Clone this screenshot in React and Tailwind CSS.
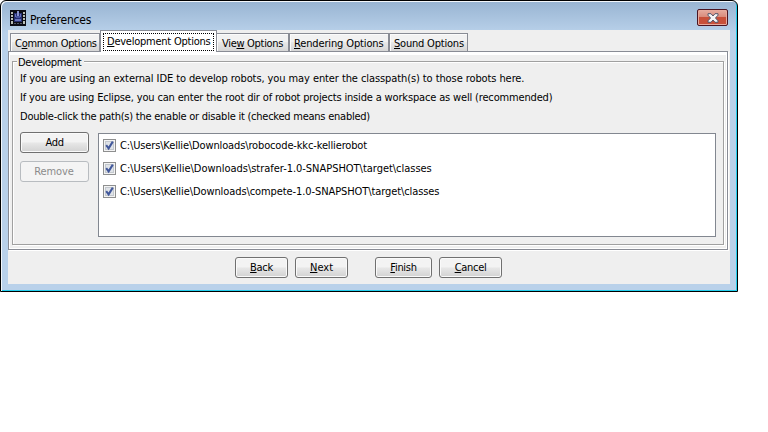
import React from "react";

const btn =
  "flex h-[21px] items-center justify-center rounded-[3px] border border-[#707070] bg-linear-to-b from-[#f3f3f3] from-45% via-[#e6e6e6] via-55% to-[#d2d2d2] shadow-[inset_0_0_0_1px_#fafafa]";
const tab =
  "mt-[3px] flex h-[18px] shrink-0 items-center border border-b-0 border-[#898c95] bg-linear-to-b from-[#f2f2f2] from-45% via-[#e8e8e8] via-50% to-[#d6d6d6] pt-[2px] pl-[4px] shadow-[inset_1px_1px_0_#fbfbfb]";

function Label({ text, k = -1, className = "" }) {
  return (
    <span className={"whitespace-pre leading-[14px] " + className}>
      {k < 0 ? text : (
        <>
          {text.slice(0, k)}
          <span className="underline decoration-1 underline-offset-[1px]">{text[k]}</span>
          {text.slice(k + 1)}
        </>
      )}
    </span>
  );
}

function RobotIcon() {
  return (
    <svg width="16" height="16" viewBox="0 0 16 16" shapeRendering="crispEdges" className="shrink-0">
      <rect width="16" height="16" fill="#0c0c14" />
      <path d="M1 2h2v2H1zM1 5h2v2H1zM1 8h2v2H1zM1 11h2v3H1zM13 2h2v2h-2zM13 5h2v2h-2zM13 8h2v2h-2zM13 11h2v3h-2z" fill="#b9bdb6" />
      <path d="M4 3h8v9H4z" fill="#252d70" />
      <path d="M5 4h1v3H5zM10 4h1v3h-1zM5 9h6v2H5z" fill="#6873bb" />
      <path d="M7 1h2v5H7z" fill="#8993ce" />
      <path d="M6 6h4v2H6z" fill="#4652a0" />
      <path d="M4 13h2v1H4zM7 13h2v1H7zM10 13h2v1h-2z" fill="#54586a" />
    </svg>
  );
}

function Check() {
  return (
    <svg width="13" height="13" viewBox="0 0 13 13" className="shrink-0">
      <rect x=".5" y=".5" width="12" height="12" fill="#f4f4f4" stroke="#8e8f8f" />
      <rect x="2.5" y="2.5" width="8" height="8" fill="#dfe3e8" stroke="#c3c8ce" />
      <path d="M3.2 6.2 5.6 9.4 9.8 2.6" fill="none" stroke="#42589b" strokeWidth="2" />
    </svg>
  );
}

const paths = [
  ["C:\\Users\\Kellie\\Downloads\\robocode-kkc-kellierobot", "tracking-[-0.14px]"],
  ["C:\\Users\\Kellie\\Downloads\\strafer-1.0-SNAPSHOT\\target\\classes", "tracking-[-0.03px]"],
  ["C:\\Users\\Kellie\\Downloads\\compete-1.0-SNAPSHOT\\target\\classes", "tracking-[-0.09px]"],
];

export default function App() {
  return (
    <div className="h-[432px] w-[768px] overflow-hidden bg-white font-['DejaVu_Sans_Condensed','DejaVu_Sans',sans-serif] text-[11px] tracking-[-0.3px] text-black [font-stretch:condensed]">
      <div className="flex h-[292px] w-[738px] flex-col rounded-t-[6px] border border-black bg-linear-to-b from-[#98b4d2] to-[#b9d1ea] to-[32px] pr-[7px] pb-[7px] pl-[7px] shadow-[inset_1px_1px_0_#f3f7fb,inset_-1px_-1px_0_#23cfee]">
        <div className="flex h-[29px] shrink-0 items-center pl-[2px]">
          <div className="mt-[5px]"><RobotIcon /></div>
          <Label text="Preferences" className="mt-[8px] ml-[4px] text-[12px] tracking-[-0.2px]" />
          <div className="mt-[4px] mr-[2px] ml-auto flex h-[17px] w-[31px] items-center justify-center rounded-[2px] border border-[#4b1522] bg-linear-to-b from-[#e6aca0] from-0% via-[#d88878] via-50% to-[#c8503a] to-50% shadow-[inset_0_0_0_1px_#e7aa9d]">
            <svg width="12" height="10" viewBox="0 0 12 10">
              <path d="M1 .7h3L6 3 8 .7h3v1.5L8.5 5 11 7.8v1.5H8L6 7 4 9.3H1V7.8L3.5 5 1 2.2z" fill="#f5f5f5" stroke="#53566b" />
            </svg>
          </div>
        </div>
        <div className="flex h-[254px] flex-col bg-[#efefef]">
          <div className="flex h-[21px] shrink-0 pl-[2px]">
            <div className={tab + " w-[90px]"}><Label text="Common Options" k={1} /></div>
            <div className="relative flex h-[22px] w-[117px] shrink-0 border border-b-0 border-[#898c95] bg-white p-[2px] pb-[1px]">
              <div className="flex flex-1 items-center border border-dotted border-black pl-[3px]">
                <Label text="Development Options" k={0} className="tracking-[-0.24px]" />
              </div>
            </div>
            <div className={tab + " w-[72px] border-l-0"}><Label text="View Options" k={3} className="ml-px" /></div>
            <div className={tab + " w-[100px]"}><Label text="Rendering Options" k={0} className="tracking-[-0.14px]" /></div>
            <div className={tab + " w-[79px]"}><Label text="Sound Options" k={0} className="tracking-[-0.2px]" /></div>
          </div>
          <div className="flex h-[199px] w-[720px] shrink-0 flex-col border border-[#898c95] px-[3px] pt-[9px] pb-[4px] shadow-[inset_1px_0_0_#fff,inset_0_3px_0_#fff,inset_-1px_-1px_0_#fff,1px_1px_0_#fff]">
            <fieldset className="flex h-[184px] w-[712px] flex-col border border-[#a0a0a0] px-[7px] shadow-[inset_1px_1px_0_#fff,1px_1px_0_#fff]">
              <div className="-mt-[6px] -ml-[3px] flex w-[67px] shrink-0 bg-[#efefef] pl-px"><Label text="Development" /></div>
              <div className="flex shrink-0 flex-col gap-[5px] pt-[2px]">
                <Label text="If you are using an external IDE to develop robots, you may enter the classpath(s) to those robots here." className="tracking-[-0.09px]" />
                <Label text="If you are using Eclipse, you can enter the root dir of robot projects inside a workspace as well (recommended)" className="tracking-[-0.16px]" />
                <Label text="Double-click the path(s) the enable or disable it (checked means enabled)" className="tracking-[-0.24px]" />
              </div>
              <div className="mt-[8px] flex gap-[9px]">
                <div className="flex w-[69px] flex-col gap-[8px]">
                  <div className={btn}><Label text="Add" /></div>
                  <div className="flex h-[21px] items-center justify-center rounded-[3px] border border-[#b8bcc0] bg-[#f4f4f4] pr-px text-[#8b8b8b]"><Label text="Remove" className="tracking-[-0.1px]" /></div>
                </div>
                <div className="mt-px flex h-[104px] w-[618px] flex-col gap-[10px] border border-[#828790] bg-white pt-[5px] pl-[4px]">
                  {paths.map(([p, c]) => (
                    <div key={p} className="flex h-[13px] items-center gap-[4px]"><Check /><Label text={p} className={"pt-px " + c} /></div>
                  ))}
                </div>
              </div>
            </fieldset>
          </div>
          <div className="flex pt-[7px] pl-[227px]">
            <div className={btn + " w-[53px]"}><Label text="Back" k={0} /></div>
            <div className={btn + " ml-[7px] w-[53px]"}><Label text="Next" k={0} className="tracking-[0px]" /></div>
            <div className={btn + " ml-[27px] w-[57px]"}><Label text="Finish" k={0} /></div>
            <div className={btn + " ml-[7px] w-[63px]"}><Label text="Cancel" k={0} /></div>
          </div>
        </div>
      </div>
    </div>
  );
}
